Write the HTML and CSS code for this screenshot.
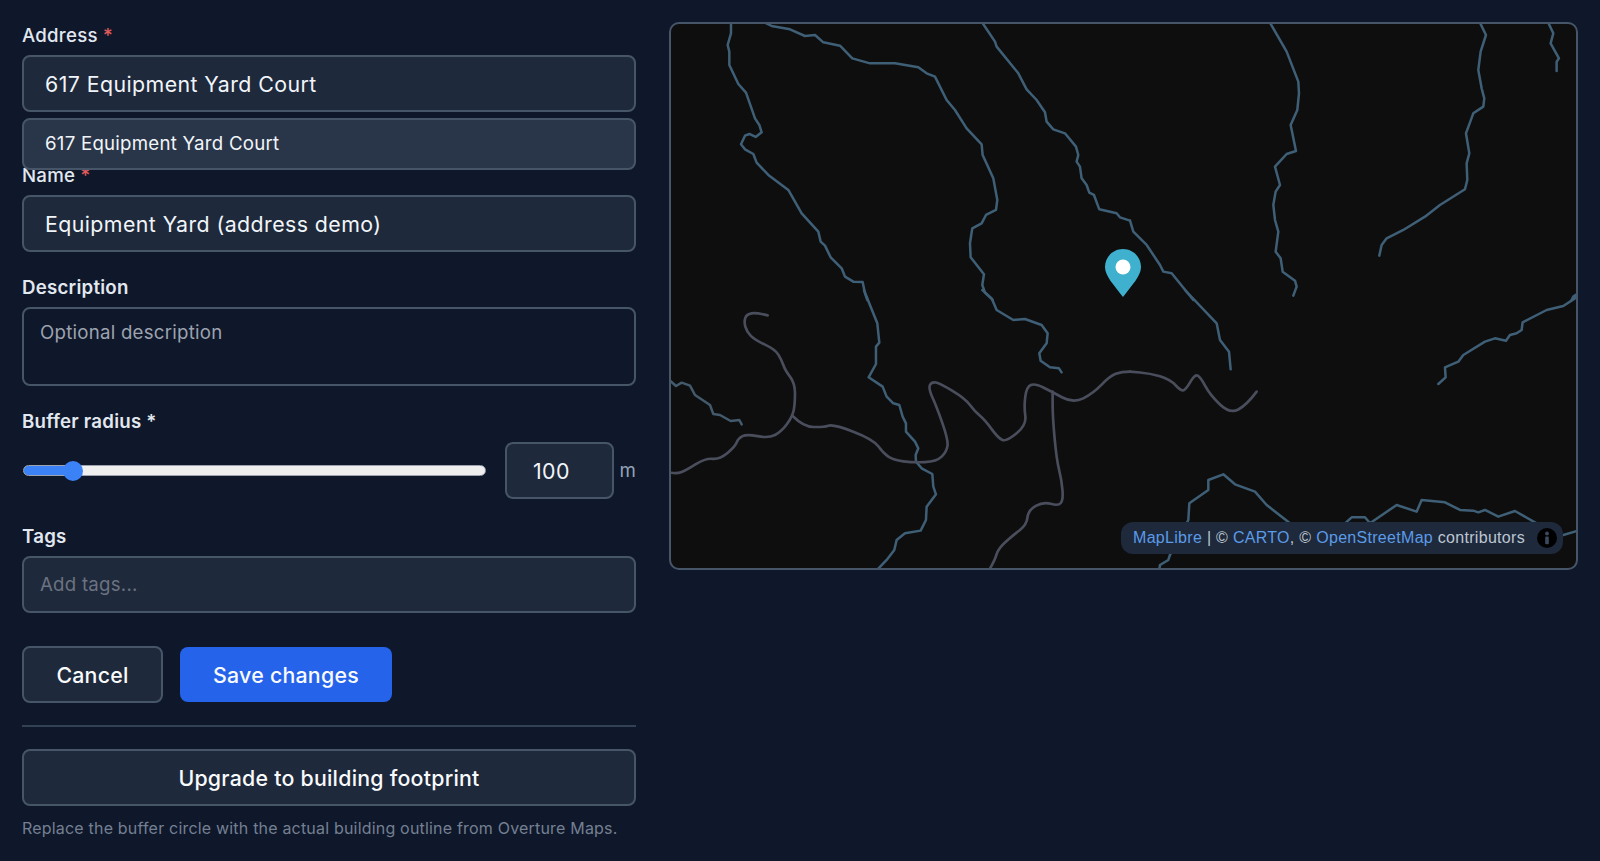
FILE: index.html
```html
<!DOCTYPE html>
<html lang="en">
<head>
    <meta charset="UTF-8">
    <meta name="viewport" content="width=device-width, initial-scale=1.0">
    <title>Edit Geofence</title>
    <link rel="stylesheet" href="styles.css">
</head>
<body>

    <div class="page">
        <form class="form">
            <div class="field field-address">
                <label class="label" for="address">Address <span class="required">*</span></label>
                <input class="input" type="text" id="address" value="617 Equipment Yard Court">
                <ul class="suggestions">
                    <li>617 Equipment Yard Court</li>
                </ul>
            </div>

            <div class="field">
                <label class="label" for="name">Name <span class="required">*</span></label>
                <input class="input" type="text" id="name" value="Equipment Yard (address demo)">
            </div>

            <div class="field">
                <label class="label label-strong" for="description">Description</label>
                <textarea class="textarea" id="description" placeholder="Optional description"></textarea>
            </div>

            <div class="field field-buffer">
                <label class="label label-strong label-buffer" for="bufferValue">Buffer radius *</label>
                <div class="buffer-row">
                    <input class="slider" type="range" min="50" max="610" value="100">
                    <input class="input number" type="text" id="bufferValue" value="100">
                    <span class="unit">m</span>
                </div>
            </div>

            <div class="field field-tags">
                <label class="label label-strong" for="tags">Tags</label>
                <input class="input tags" type="text" id="tags" placeholder="Add tags...">
            </div>

            <div class="actions">
                <button class="btn btn-cancel" type="button">Cancel</button>
                <button class="btn btn-save" type="button">Save changes</button>
            </div>

            <hr class="divider">

            <button class="btn btn-upgrade" type="button">Upgrade to building footprint</button>
            <p class="help">Replace the buffer circle with the actual building outline from Overture Maps.</p>
        </form>

        <div class="map">
            <svg class="map-lines" viewBox="671 24 905 544">
                <!-- coordinates traced per tile, each tile is drawn at 3x -->
                <g transform="translate(660 10) scale(.3333)">
                    <polyline class="river" points="213,38 213,70 203,105 208,125 208,165 235,222 258,248 285,325 298,345 305,367 287,381 268,372 255,377 243,403 255,418 280,432 290,458 325,495 385,540 425,610 475,665 482,695 495,707 512,742 545,775 555,800 580,815 608,816 615,850 622,870"/>
                    <polyline class="river" points="315,38 335,48 390,58 435,78 465,75 490,97 540,107 577,145 630,160 705,160 775,172 800,190 825,200 860,270 885,300 920,355 965,403 968,435 1000,505 1012,570 1008,600 978,615 965,640 937,655 930,700 932,742 972,793 967,825 975,848 998,870"/>
                    <polyline class="river" points="967,38 1005,95 1010,110 1075,190 1100,238 1130,270 1155,307 1160,335 1180,358 1215,370 1248,410 1255,435 1250,455 1260,470 1265,505 1280,525 1288,548 1302,555 1318,598 1370,610 1380,622 1410,632"/>
                </g>
                <g transform="translate(1130 10) scale(.3333)">
                    <polyline class="river" points="0,632 10,665 50,705 90,765 100,785 125,790 190,870"/>
                    <polyline class="river" points="420,38 470,125 505,215 507,250 502,300 482,345 498,423 470,432 435,470 450,525 437,545 430,585 435,630 445,665 437,725 452,745 458,785 495,812 500,830 490,857"/>
                    <polyline class="river" points="1050,38 1068,75 1052,125 1045,180 1055,235 1063,265 1060,290 1030,310 1008,370 1018,430 1010,460 1012,510 1005,538 930,585 885,620 820,660 770,685 755,705 748,737"/>
                    <polyline class="river" points="1255,38 1270,70 1262,100 1287,145 1280,155 1280,183"/>
                    <polyline class="river" points="1345,850 1330,860 1325,870"/>
                </g>
                <g transform="translate(660 290) scale(.3333)">
                    <polyline class="river" points="612,0 632,50 652,100 658,158 648,170 648,222 626,262 668,290 680,320 700,340 718,345 728,380 738,400 738,425 765,455 775,475 767,495 768,515 785,535 817,552 820,590 828,613 800,650 798,690 782,722 735,730 710,750 703,780 680,810 655,836"/>
                    <polyline class="river" points="967,0 995,25 1010,60 1060,90 1095,87 1145,105 1163,130 1160,160 1138,190 1142,212 1170,232 1197,235 1205,247"/>
                    <polyline class="river river-dim" points="26,268 48,288 65,278 90,287 105,315 150,345 160,372 180,375 212,393 238,390 245,403"/>
                    <path class="stream" d="M323,76 Q290,68 275,70 Q260,72 256,83.5 Q252,95 256,110 Q260,125 272.5,137.5 Q285,150 315,164 Q345,178 355,194 Q365,210 370,225 Q375,240 390,260 Q405,280 405,310 Q405,340 401.5,359 Q398,378 381.5,401.5 Q365,425 345,435 Q325,445 292.5,438.5 Q260,432 247.5,438.5 Q235,445 230,457.5 Q225,470 202.5,489 Q180,508 157.5,506.5 Q135,505 107.5,522.5 Q80,540 65,546 Q50,552 26,547"/>
                    <path class="stream" d="M398,378 Q430,410 460,411 Q490,412 505,407 Q520,402 580,425 Q640,448 655,469 Q670,490 685,500 Q700,510 730,514 Q760,518 795,516.5 Q830,515 845,500 Q860,485 862.5,467.5 Q865,450 847.5,400 Q830,350 817.5,322.5 Q805,295 810,285 Q815,275 827.5,277.5 Q840,280 877.5,302.5 Q915,325 930,345 Q945,365 960,377.5 Q975,390 995,417.5 Q1015,445 1027.5,450 Q1040,455 1070,430 Q1100,405 1096,377.5 Q1092,350 1096,320 Q1100,290 1112.5,285 Q1125,280 1150,292.5 Q1175,305 1207.5,322.5 Q1240,340 1270,325 Q1300,310 1325,284 Q1350,258 1367.5,251.5 Q1385,245 1410,245"/>
                    <path class="stream" d="M1178,305 L1178,342.5 Q1178,380 1184,445 Q1190,510 1197.5,540 Q1205,570 1207.5,600 Q1210,630 1202.5,639 Q1195,648 1172.5,641.5 Q1150,635 1127.5,647.5 Q1105,660 1102.5,682.5 Q1100,705 1080,720 Q1060,735 1037.5,755 Q1015,775 1010,792.5 Q1005,810 990,836"/>
                </g>
                <g transform="translate(1130 290) scale(.3333)">
                    <polyline class="river" points="165,0 260,100 270,150 297,185 302,238"/>
                    <polyline class="river" points="1345,8 1335,25 1300,48 1250,60 1178,97 1175,120 1160,130 1140,135 1128,152 1095,145 1065,155 1000,195 985,215 945,232 947,262 925,282"/>
                    <polyline class="river" points="120,795 115,810 90,825 88,838"/>
                    <polyline class="river" points="120,795 175,690 178,640 235,600 235,570 280,553 315,583 375,605 410,645 480,700"/>
                    <polyline class="river" points="645,700 665,682 705,682 720,700 800,645 860,665 875,630 945,637 990,660 1030,662 1045,667 1065,660 1105,680 1155,663 1220,700"/>
                    <polyline class="river" points="1290,738 1345,722"/>
                    <path class="stream" d="M0,245 L30,247.5 Q60,250 90,259 Q120,268 137.5,286.5 Q155,305 162.5,300 Q170,295 182.5,273.5 Q195,252 203.5,257 Q212,262 226,288.5 Q240,315 270,343.5 Q300,372 325,358.5 Q350,345 380,305"/>
                </g>
                <g transform="translate(1105 249)">
                    <path class="pin" d="M18 0C8 0 0 8 0 18c0 9 9 18 18 30 9-12 18-21 18-30C36 8 28 0 18 0z"/>
                    <circle class="pin-dot" cx="18" cy="18" r="7.5"/>
                </g>
            </svg>

            <div class="attribution">
                <span><a href="#">MapLibre</a> | © <a href="#">CARTO</a>, © <a href="#">OpenStreetMap</a> contributors</span>
                <svg class="info" viewBox="0 0 20 20">
                    <circle cx="10" cy="10" r="10" fill="#000"/>
                    <circle cx="10" cy="5.5" r="1.9" fill="#3b4a5e"/>
                    <rect x="8.2" y="8.6" width="3.6" height="7.6" rx="1" fill="#3b4a5e"/>
                </svg>
            </div>
        </div>
    </div>

</body>
</html>
```

FILE: styles.css
```css
* {
    box-sizing: border-box;
}

body {
    font-family: Inter, 'Liberation Sans', sans-serif;
    letter-spacing: 0.015em;
    margin: 0;
    padding: 0;
    background-color: #0f172a;
    color: #f1f5f9;
    height: 100vh;
    overflow: hidden;
}

.page {
    display: flex;
    align-items: flex-start;
    gap: 33px;
    padding: 22px 22px 0;
}

.form {
    flex: 0 0 614px;
    display: flex;
    flex-direction: column;
}

.field {
    display: flex;
    flex-direction: column;
    margin-bottom: 22px;
}

.field-address {
    position: relative;
    margin-bottom: 50px;
}

.field-buffer {
    margin-bottom: 24px;
}

.field-tags {
    margin-bottom: 33px;
}

.label {
    font-size: 18.67px;
    font-weight: 500;
    line-height: 28px;
    margin-bottom: 5px;
    color: #e2e8f0;
}

.label-strong {
    font-weight: 600;
}

.label-buffer {
    margin-bottom: 6px;
}

.required {
    color: #e25c5c;
}

.input {
    width: 100%;
    height: 57px;
    padding: 0 21px;
    background-color: #1e293b;
    border: 2px solid #475569;
    border-radius: 8px;
    color: #f1f5f9;
    font-family: inherit;
    font-size: 21.33px;
    letter-spacing: 0.02em;
}

.suggestions {
    position: absolute;
    top: 96px;
    left: 0;
    right: 0;
    z-index: 2;
    margin: 0;
    padding: 0;
    list-style: none;
    background-color: #293548;
    border: 2px solid #475569;
    border-radius: 8px;
}

.suggestions li {
    height: 48px;
    line-height: 48px;
    padding: 0 21px;
    font-size: 18.67px;
    color: #f1f5f9;
}

.textarea {
    display: block;
    width: 100%;
    height: 79px;
    padding: 12px 16px;
    background-color: #0f172a;
    border: 2px solid #475569;
    border-radius: 8px;
    color: #f1f5f9;
    font-family: inherit;
    font-size: 18.67px;
    letter-spacing: inherit;
    resize: none;
}

.textarea::placeholder {
    color: #9ca3af;
    opacity: 1;
}

.tags {
    padding: 0 16px;
    font-size: 18.67px;
    letter-spacing: inherit;
}

.tags::placeholder {
    color: #6b7280;
    opacity: 1;
}

.buffer-row {
    display: flex;
    align-items: center;
}

.slider {
    -webkit-appearance: none;
    appearance: none;
    width: 463px;
    height: 20px;
    margin: 0 19px 0 1px;
    background: transparent;
}

.slider::-webkit-slider-runnable-track {
    height: 11px;
    border-radius: 6px;
    border: 1px solid #9ca3af;
    background: linear-gradient(to right, #3b82f6 49px, #efefef 49px);
}

.slider::-webkit-slider-thumb {
    -webkit-appearance: none;
    width: 20px;
    height: 20px;
    margin-top: -5.5px;
    border-radius: 50%;
    background-color: #3b82f6;
}

.number {
    flex: 0 0 109px;
    padding: 0 26px;
}

.unit {
    margin-left: auto;
    font-size: 18.67px;
    color: #94a3b8;
}

.actions {
    display: flex;
    align-items: center;
    gap: 17px;
}

.btn {
    height: 57px;
    border: 2px solid #475569;
    border-radius: 8px;
    background-color: #1e293b;
    color: #f8fafc;
    font-family: inherit;
    font-size: 21.33px;
    font-weight: 500;
    letter-spacing: inherit;
    cursor: pointer;
}

.btn-cancel {
    width: 141px;
}

.btn-save {
    width: 212px;
    height: 55px;
    border: none;
    background-color: #2563eb;
}

.divider {
    width: 100%;
    height: 2px;
    margin: 22px 0 22px;
    border: none;
    background-color: #334155;
}

.btn-upgrade {
    width: 100%;
}

.help {
    margin: 12px 0 0;
    font-size: 16px;
    line-height: 20px;
    letter-spacing: 0.012em;
    color: #748092;
}

.map {
    position: relative;
    width: 909px;
    height: 548px;
    border: 2px solid #475569;
    border-radius: 10px;
    background-color: #0e0e0e;
    overflow: hidden;
}

.map-lines {
    display: block;
    width: 100%;
    height: 100%;
}

.map-lines polyline,
.map-lines .stream {
    fill: none;
    stroke-linejoin: round;
    stroke-linecap: round;
    stroke-width: 7.5;
}

.map-lines .river {
    stroke: #3f5f77;
}

.map-lines .river-dim {
    stroke: #43596c;
}

.map-lines .stream {
    stroke: #4a4e5c;
    stroke-width: 8;
}

.pin {
    fill: #3fb1ce;
}

.pin-dot {
    fill: #fff;
}

.attribution {
    position: absolute;
    top: 498px;
    right: 13px;
    display: flex;
    align-items: center;
    gap: 12px;
    height: 32px;
    padding: 0 6px 0 12px;
    border-radius: 12px;
    background-color: #1e293b;
    font-family: 'Liberation Sans', Arial, sans-serif;
    font-size: 16px;
    letter-spacing: 0.3px;
    color: #bcc6d2;
}

.attribution a {
    color: #5b9be8;
    text-decoration: none;
}

.info {
    width: 20px;
    height: 20px;
}
```
